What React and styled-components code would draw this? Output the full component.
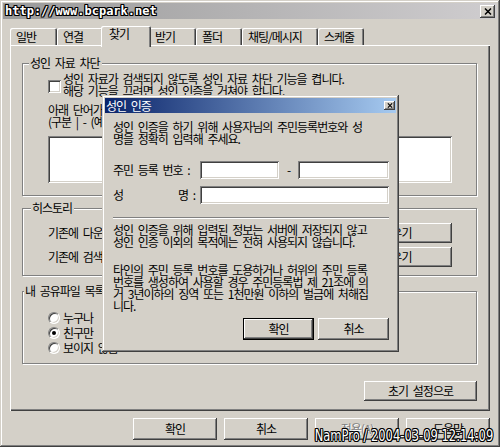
import styled, { createGlobalStyle, css } from "styled-components";

const FACE = "#d4d0c8";

const GlobalStyle = createGlobalStyle`
  * { box-sizing: border-box; }
  html, body { margin: 0; padding: 0; background: ${FACE}; }
  body {
    font-family: "Noto Sans CJK KR", "Noto Sans", sans-serif;
    font-size: 12px;
    line-height: 12px;
    letter-spacing: -1px;
    word-spacing: 3px;
    color: #000;
  }
`;

const outline =
  "-1px -1px 0 #000, 1px -1px 0 #000, -1px 1px 0 #000, 1px 1px 0 #000, 0 1px 0 #000, 1px 0 0 #000, -1px 0 0 #000, 0 -1px 0 #000";

const raisedEdge = css`
  box-shadow: inset -1px -1px #404040, inset 1px 1px #fff, inset -2px -2px #808080, inset 2px 2px ${FACE};
`;
const sunkenEdge = css`
  box-shadow: inset 1px 1px #808080, inset -1px -1px #fff, inset 2px 2px #404040, inset -2px -2px ${FACE};
`;
const frameEdge = css`
  box-shadow: inset -1px -1px #404040, inset 1px 1px ${FACE}, inset -2px -2px #808080, inset 2px 2px #fff;
`;

const Window = styled.div`
  position: relative;
  width: 500px;
  height: 447px;
  padding: 3px;
  background: ${FACE};
  display: flex;
  flex-direction: column;
  overflow: hidden;
  ${frameEdge}
`;

const TitleBar = styled.div`
  height: 16px;
  display: flex;
  align-items: center;
  justify-content: space-between;
  padding: 0 2px;
  background: linear-gradient(to right, #9a9a9a, #cfcdcf);
`;

const SiteMark = styled.span`
  font-family: "DejaVu Sans Mono", "Liberation Mono", monospace;
  font-weight: bold;
  font-size: 12px;
  line-height: 16px;
  letter-spacing: 0;
  word-spacing: 0;
  color: #fff;
  text-shadow: ${outline};
`;

const CaptionButton = styled.div`
  width: ${(p) => p.$w}px;
  height: ${(p) => p.$h}px;
  flex-shrink: 0;
  background: ${FACE};
  display: flex;
  align-items: center;
  justify-content: center;
  ${raisedEdge}
`;

const TabStrip = styled.div`
  display: flex;
  align-items: flex-end;
  height: 19px;
  margin-top: 7px;
  padding-left: 7px;
`;

const Tab = styled.div`
  width: ${(p) => p.$w}px;
  height: 17px;
  padding: 3px 0 0 6px;
  white-space: nowrap;
  background: ${FACE};
  border-radius: 2px 2px 0 0;
  box-shadow: inset 1px 1px #fff, inset -1px 0 #404040, inset -2px 0 #808080;
  ${(p) =>
    p.$active &&
    css`
      position: relative;
      z-index: 1;
      width: ${p.$w + 4}px;
      height: 21px;
      margin: 0 -2px -2px;
      padding: 2px 0 0 8px;
    `}
`;

const Panel = styled.div`
  margin-left: 7px;
  width: 480px;
  height: 366px;
  padding: 0 13px 0 12px;
  display: flex;
  flex-direction: column;
  box-shadow: inset 1px 1px #fff, inset -1px -1px #404040, inset -2px -2px #808080;
`;

const GroupBox = styled.div`
  position: relative;
  margin-top: ${(p) => p.$top}px;
  padding: ${(p) => p.$pad};
  border: 1px solid #808080;
  box-shadow: 1px 1px 0 #fff, inset 1px 1px 0 #fff;
`;

const GroupTitle = styled.span`
  position: absolute;
  top: -7px;
  left: ${(p) => p.$left}px;
  padding: 0 2px 0 1px;
  background: ${FACE};
  white-space: nowrap;
`;

const CheckRow = styled.div`
  display: flex;
  align-items: center;
  gap: 2px;
  padding-left: 25px;
`;

const CheckBox = styled.span`
  width: 13px;
  height: 13px;
  margin-top: 3px;
  flex-shrink: 0;
  background: #fff;
  ${sunkenEdge}
`;

const Lines = styled.div`
  white-space: nowrap;
`;

const Indent = styled.div`
  margin-top: ${(p) => p.$mt || 0}px;
  padding-left: 25px;
  white-space: nowrap;
`;

const TextBox = styled.div`
  margin: 8px 0 0 25px;
  width: 404px;
  height: 47px;
  background: #fff;
  ${sunkenEdge}
`;

const ActionRow = styled.div`
  display: flex;
  align-items: center;
  justify-content: space-between;
  height: 20px;
  padding-left: 25px;
  white-space: nowrap;
  & + & {
    margin-top: 4px;
  }
`;

const Button = styled.div`
  width: ${(p) => p.$w}px;
  height: ${(p) => p.$h || 22}px;
  flex-shrink: 0;
  display: flex;
  align-items: center;
  justify-content: center;
  white-space: nowrap;
  background: ${FACE};
  ${raisedEdge}
  ${(p) =>
    p.$default &&
    css`
      box-shadow: inset 0 0 0 1px #000, inset -2px -2px #404040, inset 2px 2px #fff,
        inset -3px -3px #808080;
    `}
  ${(p) =>
    p.$disabled &&
    css`
      color: #808080;
      text-shadow: 1px 1px 0 #fff;
    `}
`;

const RadioRow = styled.div`
  display: flex;
  align-items: center;
  gap: 3px;
  height: 15px;
  padding-left: 25px;
  white-space: nowrap;
`;

const Radio = styled.span`
  width: 12px;
  height: 12px;
  flex-shrink: 0;
  border-radius: 50%;
  border: 1px solid;
  border-color: #808080 #fff #fff #808080;
  background: #fff;
  box-shadow: inset 1px 1px #404040, inset -1px -1px ${FACE};
  display: flex;
  align-items: center;
  justify-content: center;
  &::after {
    content: "";
    width: 4px;
    height: 4px;
    border-radius: 50%;
    background: ${(p) => (p.$checked ? "#000" : "transparent")};
  }
`;

const ResetRow = styled.div`
  display: flex;
  justify-content: flex-end;
  margin-top: 17px;
`;

const Footer = styled.div`
  display: flex;
  justify-content: flex-end;
  gap: 7px;
  margin-top: 7px;
  padding-right: 7px;
`;

const Dialog = styled.div`
  position: absolute;
  left: 102px;
  top: 95px;
  width: 297px;
  height: 257px;
  padding: 3px;
  background: ${FACE};
  display: flex;
  flex-direction: column;
  ${frameEdge}
`;

const DialogTitle = styled.div`
  height: 15px;
  display: flex;
  align-items: center;
  justify-content: space-between;
  padding: 0 1px 0 1px;
  color: #fff;
  background: linear-gradient(to right, #0a246a, #a6caf0);
  white-space: nowrap;
`;

const DialogBody = styled.div`
  padding: 8px 7px 0 8px;
  display: flex;
  flex-direction: column;
`;

const Para = styled.div`
  margin-top: ${(p) => p.$mt || 0}px;
  white-space: nowrap;
`;

const FieldRow = styled.div`
  display: flex;
  align-items: center;
  height: 18px;
  margin-top: ${(p) => p.$mt}px;
`;

const FieldLabel = styled.div`
  width: 82px;
  margin-right: 5px;
  display: flex;
  justify-content: space-between;
  white-space: nowrap;
`;

const Field = styled.div`
  width: ${(p) => p.$w}px;
  height: 18px;
  background: #fff;
  ${sunkenEdge}
`;

const Dash = styled.span`
  width: 19px;
  text-align: center;
`;

const Separator = styled.div`
  height: 2px;
  margin-top: 13px;
  border-top: 1px solid #808080;
  border-bottom: 1px solid #fff;
`;

const DialogButtons = styled.div`
  display: flex;
  justify-content: flex-end;
  gap: 4px;
  margin-top: 6px;
`;

const Stamp = styled.div`
  position: absolute;
  right: 7px;
  bottom: 3px;
  font-family: "Liberation Sans Narrow", "DejaVu Sans Condensed", sans-serif;
  font-size: 16px;
  line-height: 16px;
  letter-spacing: 0;
  word-spacing: 0;
  color: #fff;
  text-shadow: ${outline};
  white-space: nowrap;
  transform: scaleX(0.8);
  transform-origin: right center;
`;

const CloseGlyph = ({ size }) => (
  <svg width={size} height={size - 1} viewBox="0 0 8 7">
    <path d="M1 0.5 L7 6.5 M7 0.5 L1 6.5" stroke="#000" strokeWidth="1.5" fill="none" />
  </svg>
);

const tabs = [
  { label: "일반", w: 47 },
  { label: "연결", w: 46 },
  { label: "찾기", w: 46, active: true },
  { label: "받기", w: 47 },
  { label: "폴더", w: 46 },
  { label: "채팅/메시지", w: 76 },
  { label: "스케줄", w: 46 },
];

const warning = [
  "타인의 주민 등록 번호를 도용하거나 허위의 주민 등록",
  "번호를 생성하여 사용할 경우 주민등록법 제 21조에 의",
  "거 3년이하의 징역 또는 1천만원 이하의 벌금에 처해집",
  "니다.",
];

const App = () => {
  return (
    <Window>
      <GlobalStyle />
      <TitleBar>
        <SiteMark>http://www.bcpark.net</SiteMark>
        <CaptionButton $w={15} $h={13}>
          <CloseGlyph size={8} />
        </CaptionButton>
      </TitleBar>

      <TabStrip>
        {tabs.map((t) => (
          <Tab key={t.label} $w={t.w} $active={t.active}>
            {t.label}
          </Tab>
        ))}
      </TabStrip>

      <Panel>
        <GroupBox $top={18} $pad="9px 0 12px 0">
          <GroupTitle $left={6}>성인 자료 차단</GroupTitle>
          <CheckRow>
            <CheckBox />
            <Lines>
              <div>성인 자료가 검색되지 않도록 성인 자료 차단 기능을 켭니다.</div>
              <div>해당 기능을 끄려면 성인 인증을 거쳐야 합니다.</div>
            </Lines>
          </CheckRow>
          <Indent $mt={7}>
            <div>아래 단어가 들어간 파일은 검색되지 않습니다.</div>
            <div>(구분 | - (예: 단어1|단어2)</div>
          </Indent>
          <TextBox />
        </GroupBox>

        <GroupBox $top={12} $pad="14px 24px 8px 0">
          <GroupTitle $left={8}>히스토리</GroupTitle>
          <ActionRow>
            기존에 다운로드한 파일 목록
            <Button $w={136} $h={20}>목록 지우기</Button>
          </ActionRow>
          <ActionRow>
            기존에 검색한 단어 목록
            <Button $w={136} $h={20}>목록 지우기</Button>
          </ActionRow>
        </GroupBox>

        <GroupBox $top={15} $pad="18px 0 8px 0">
          <GroupTitle $left={1}>내 공유파일 목록 공개</GroupTitle>
          <RadioRow>
            <Radio />
            누구나
          </RadioRow>
          <RadioRow>
            <Radio $checked />
            친구만
          </RadioRow>
          <RadioRow>
            <Radio />
            보이지 않음
          </RadioRow>
        </GroupBox>

        <ResetRow>
          <Button $w={113} $h={20}>초기 설정으로</Button>
        </ResetRow>
      </Panel>

      <Footer>
        <Button $w={84}>확인</Button>
        <Button $w={84}>취소</Button>
        <Button $w={84} $disabled>적용(A)</Button>
        <Button $w={84}>도움말</Button>
      </Footer>

      <Dialog>
        <DialogTitle>
          <span>성인 인증</span>
          <CaptionButton $w={11} $h={9}>
            <CloseGlyph size={6} />
          </CaptionButton>
        </DialogTitle>
        <DialogBody>
          <Para>
            <div>성인 인증을 하기 위해 사용자님의 주민등록번호와 성</div>
            <div>명을 정확히 입력해 주세요.</div>
          </Para>
          <FieldRow $mt={16}>
            <FieldLabel>
              <span>주민 등록 번호 :</span>
            </FieldLabel>
            <Field $w={79} />
            <Dash>-</Dash>
            <Field $w={91} />
          </FieldRow>
          <FieldRow $mt={7}>
            <FieldLabel>
              <span>성</span>
              <span>명 :</span>
            </FieldLabel>
            <Field $w={189} />
          </FieldRow>
          <Separator />
          <Para $mt={5}>
            <div>성인 인증을 위해 입력된 정보는 서버에 저장되지 않고</div>
            <div>성인 인증 이외의 목적에는 전혀 사용되지 않습니다.</div>
          </Para>
          <Para $mt={16}>
            {warning.map((line) => (
              <div key={line}>{line}</div>
            ))}
          </Para>
          <DialogButtons>
            <Button $w={71} $default>확인</Button>
            <Button $w={71}>취소</Button>
          </DialogButtons>
        </DialogBody>
      </Dialog>

      <Stamp>NamPro / 2004-03-09 12:14:09</Stamp>
    </Window>
  );
};

export default App;
